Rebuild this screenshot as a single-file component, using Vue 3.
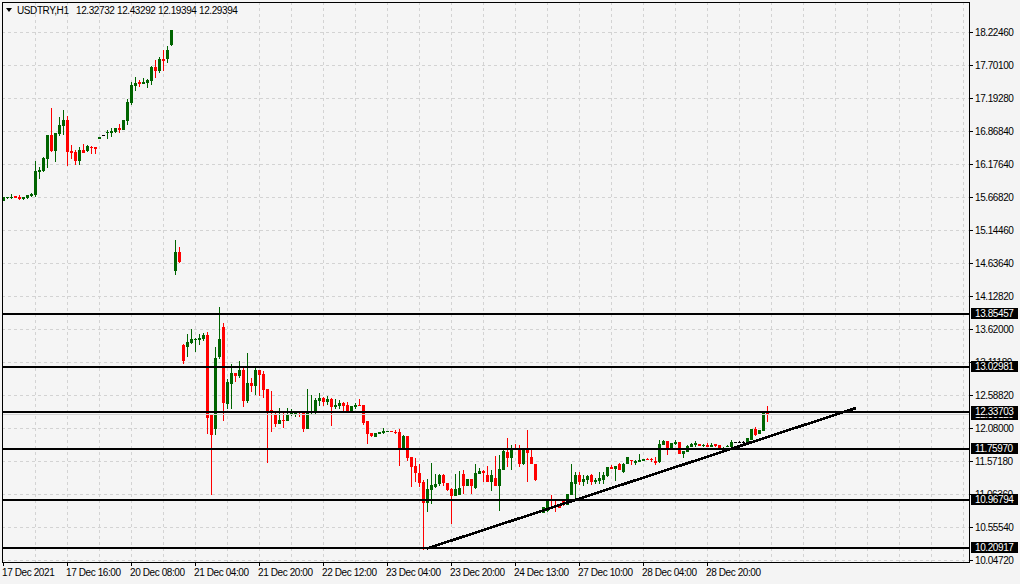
<template>
  <div class="terminal">
    <div class="chart-row">
      <div class="plot">
        <svg class="plot-svg" width="968" height="561" viewBox="0 0 968 561">
          <g class="grid">
            <line v-for="x in gridX" :key="'v' + x" :x1="x" y1="0" :x2="x" y2="561" />
            <line v-for="y in gridY" :key="'h' + y" x1="0" :y1="y" x2="968" :y2="y" />
          </g>
          <g v-for="(c, i) in candles" :key="i" :class="['candle', c.kind]">
            <rect :x="c.x" :y="c.wickTop" width="1" :height="c.wickH" />
            <rect :x="c.x - 1" :y="c.top" width="3" :height="c.h" />
          </g>
          <line class="level level-soft" x1="0" y1="412.5" x2="968" y2="412.5" />
          <line v-for="lv in levels" :key="lv.y" class="level" x1="0" :y1="lv.y - 2" x2="968" :y2="lv.y - 2" />
          <line class="trend" x1="425" y1="546.5" x2="854" y2="406" />
        </svg>
        <div class="legend">
          <span class="legend-arrow"></span>
          <span class="legend-symbol">USDTRY,H1</span>
          <span v-for="p in ohlc" :key="p" class="legend-price">{{ p }}</span>
        </div>
      </div>
      <div class="price-axis">
        <div v-for="t in priceTicks" :key="t.y" class="price-tick" :style="{ top: t.y - 2 + 'px' }">
          <i></i><span>{{ t.label }}</span>
        </div>
        <div class="price-tag" style="top: 413px">12.30120</div>
        <div v-for="lv in levels" :key="lv.label" class="price-tag" :style="{ top: lv.y - 2 + 'px' }">{{ lv.label }}</div>
      </div>
    </div>
    <div class="time-axis">
      <div v-for="(t, i) in timeTicks" :key="t" class="time-tick" :style="{ left: 3 + i * 64 + 'px' }">
        <i></i><span>{{ t }}</span>
      </div>
    </div>
  </div>
</template>

<script setup>
// y values are screen pixels, same for candles and levels
const ohlc = ['12.32732', '12.43292', '12.19394', '12.29394']

const gridX = Array.from({ length: 30 }, (_, i) => 33.5 + i * 32)
const gridY = Array.from({ length: 17 }, (_, i) => 30.5 + i * 33)

const priceTicks = [
  '18.22460', '17.70100', '17.19280', '16.86840', '16.17640', '15.66820',
  '15.14460', '14.63640', '14.12820', '13.62000', '13.11180', '12.58820',
  '12.08000', '11.57180', '11.06360', '10.55540', '10.04720'
].map((label, i) => ({ label, y: 32 + i * 33 }))

const levels = [
  { y: 314, label: '13.85457' },
  { y: 367, label: '13.02981' },
  { y: 412, label: '12.33703' },
  { y: 449, label: '11.75970' },
  { y: 500, label: '10.96794' },
  { y: 548, label: '10.20917' }
]

const timeTicks = [
  '17 Dec 2021', '17 Dec 16:00', '20 Dec 08:00', '21 Dec 04:00', '21 Dec 20:00',
  '22 Dec 12:00', '23 Dec 04:00', '23 Dec 20:00', '24 Dec 13:00', '27 Dec 10:00',
  '28 Dec 04:00', '28 Dec 20:00'
]

// [index, kind, wick top, body top, body bottom, wick bottom], kind: g / r / k
const raw = [
  [0,'g',197,197,201,201],[1,'g',196.7,197,198,199],[2,'g',194,197,198,199],[3,'r',196.3,196.3,198,198],
  [4,'r',195.3,197,199,200],[5,'g',197,197,199,200],[6,'g',195,195,198,199],[7,'g',193,194,196,197],
  [8,'g',161,171,195,197],[9,'g',167,170,172,179],[10,'g',157,158,171,172],[11,'g',135,135,159,168],
  [12,'r',108,135,151,152],[13,'g',133,133,151,162],[14,'g',117,125,134,136],[15,'g',110,120,126,135],
  [16,'r',116,120,152,166],[17,'r',145,151,153,159],[18,'r',150,152,161,165],[19,'g',147,150,161,165],
  [20,'r',144,150,153,153],[21,'g',145,146,151,152],[22,'r',146,147,148,154],[23,'r',147,147,149,154],
  [24,'g',137,137,139,139],[25,'k',135,135,136,136],[26,'g',130,132,133,139],[27,'g',128,131,133,137],
  [28,'g',128,128,132,133],[29,'r',124,128,130,133],[30,'g',120,120,130,130],[31,'g',99,102,121,125],
  [32,'g',82,85,103,105],[33,'g',77,83,86,91],[34,'r',80,82,84,87],[35,'g',78,82,84,84],
  [36,'g',79,80,83,88],[37,'g',66,67,81,85],[38,'r',60,67,71,78],[39,'g',57,59,71,73],
  [40,'r',50,59,61,71],[41,'g',46,50,59,63],[42,'g',30,30,45,46],
  [43,'g',240,252,271,275],[44,'r',247,252,262,263],

  [45,'r',344,345,361,364],[46,'g',334,342,347,357],[47,'g',329,339,343,344],[48,'g',338,339,340,352],
  [49,'g',334,338,340,345],[50,'g',333,335,339,341],[51,'r',332,335,418,434],[52,'r',415,415,435,495],
  [53,'g',347,358,429,435],[54,'g',307,339,357,359],[55,'r',323,327,403,421],[56,'g',379,382,404,409],
  [57,'g',364,373,384,409],[58,'r',373,373,376,382],[59,'g',361,370,376,378],[60,'r',368,370,401,407],
  [61,'g',353,383,401,403],[62,'r',378,383,386,392],[63,'g',366,370,386,395],[64,'r',370,370,375,396],
  [65,'r',371,374,390,398],[66,'r',389,389,411,463],[67,'r',391,410,412,432],[68,'r',412,414,424,427],
  [69,'g',408,420,424,424],[70,'r',411,420,421,428],[71,'g',408,414,421,421],[72,'g',409,412,415,416],
  [73,'g',411,412,414,417],[74,'r',411,412,413,417],[75,'r',413,413,429,432],[76,'g',389,413,429,429],
  [77,'g',395,412,413,414],[78,'g',398,400,412,415],[79,'g',393,398,401,406],[80,'r',397,398,402,406],
  [81,'g',396,399,402,405],[82,'r',398,399,407,426],[83,'g',399,405,407,409],[84,'g',400,403,406,409],
  [85,'r',402,403,406,413],[86,'r',402,405,412,413],[87,'g',406,406,412,412],[88,'g',403,405,407,409],
  [89,'r',399,405,406,406],[90,'r',405,405,423,425],[91,'r',421,421,434,444],[92,'r',433,433,436,437],
  [93,'g',433,433,437,437],[94,'g',432,432,434,434],[95,'g',428,431,433,434],[96,'g',431,431,432,432],
  [97,'r',431,431,432,432],[98,'r',430,432,433,434],[99,'r',429,432,448,466],[100,'g',435,436,448,449],
  [101,'r',436,436,458,461],

  [102,'r',457,457,467,487],[103,'r',458,466,473,482],[104,'r',464,473,483,487],[105,'r',480,482,503,550],
  [106,'g',479,489,503,512],[107,'g',463,485,490,504],[108,'g',474,484,487,488],[109,'g',474,475,484,486],
  [110,'r',474,475,483,486],[111,'r',483,483,490,491],[112,'r',488,489,496,524],[113,'g',474,489,496,496],
  [114,'g',471,488,495,495],[115,'r',470,474,486,494],[116,'g',479,479,486,486],[117,'r',479,479,486,494],
  [118,'g',464,473,488,489],[119,'g',468,471,474,474],[120,'r',470,471,473,482],[121,'r',466,475,482,482],
  [122,'g',470,475,482,491],[123,'r',456,478,486,486],[124,'g',455,469,486,511],[125,'g',449,451,470,470],
  [126,'r',438,452,458,467],[127,'g',445,449,458,470],[128,'r',444,449,450,450],[129,'r',445,449,464,467],
  [130,'g',448,448,464,465],[131,'r',430,449,453,482],[132,'r',449,457,464,464],[133,'r',464,464,480,481],
  [135,'g',507,507,513,513],[136,'g',499,499,511,512],[137,'r',495,499,501,508],[138,'r',500,500,501,512],
  [139,'r',504,504,508,508],[140,'r',499,501,505,506],[141,'g',494,494,505,505],

  [142,'g',464,482,495,495],[143,'g',472,475,484,498],[144,'r',472,475,482,485],[145,'g',475,479,482,486],
  [146,'g',475,476,480,484],[147,'r',474,475,482,485],[148,'g',478,480,482,484],[149,'g',472,478,481,484],
  [150,'g',472,475,480,484],[151,'g',467,467,476,477],[152,'r',465,467,469,469],[153,'g',466,466,469,481],
  [154,'r',463,464,470,470],[155,'g',463,464,472,473],[156,'g',457,457,464,464],[157,'r',460,460,461,465],
  [158,'g',460,461,463,465],[159,'g',454,460,462,462],[160,'g',459,459,461,461],[161,'r',458,459,460,460],
  [162,'r',458,459,460,462],[163,'r',457,461,463,465],[164,'g',440,444,462,463],[165,'g',440,441,445,445],
  [166,'r',441,441,448,455],[167,'g',443,443,449,449],[168,'g',440,442,444,445],[169,'r',442,442,454,454],
  [170,'g',451,451,454,458],[171,'g',445,446,452,452],[172,'g',443,444,447,447],[173,'g',441,443,445,447],
  [174,'r',444,444,446,446],[175,'g',444,445,446,447],[176,'r',443,445,447,447],[177,'g',443,445,447,447],
  [178,'r',444,444,446,447],[179,'r',445,445,449,449],[180,'g',447,448,449,450],[181,'g',445,446,447,447],
  [182,'g',440,442,447,447],[183,'k',442,442,443,443],[184,'k',441,442,443,443],[185,'k',441,442,443,444],
  [186,'g',438,438,444,444],[187,'g',429,429,440,440],[188,'r',427,429,435,436],[189,'g',430,430,434,434],
  [190,'g',412,412,431,431],[191,'r',406,412,415,422]
]

// plot is shifted 2px right and 2px down from the window origin
const candles = raw.map(([i, kind, wt, t, b, wb]) => ({
  kind,
  x: 1 + i * 4,
  wickTop: wt - 2,
  wickH: wb - wt,
  top: t - 2,
  h: Math.max(b - t, 1)
}))
</script>

<style>
html, body {
  margin: 0;
  background: #f4f4f4;
}
</style>

<style scoped>
.terminal {
  width: 1020px;
  height: 584px;
  padding-top: 2px;
  padding-left: 2px;
  box-sizing: border-box;
  display: flex;
  flex-direction: column;
  background: #f4f4f4;
  color: #000;
  font-family: "Liberation Sans", Arial, sans-serif;
  font-size: 10px;
  letter-spacing: -0.4px;
  overflow: hidden;
}

.chart-row {
  display: flex;
}

.plot {
  position: relative;
  width: 968px;
  height: 561px;
  box-sizing: border-box;
  background: #f5f5f5;
  border: 1px solid #000;
  overflow: hidden;
}

.plot-svg {
  display: block;
  margin: -1px 0 0 -1px;
  shape-rendering: crispEdges;
}

.grid line {
  stroke: #d3d3d3;
  stroke-width: 1;
  stroke-dasharray: 3 3;
}

.candle.g rect {
  fill: #006400;
}

.candle.r rect {
  fill: #ff0000;
}

.candle.k rect {
  fill: #000;
}

.level {
  stroke: #000;
  stroke-width: 2;
}

.level-soft {
  stroke: #d3d3d3;
  stroke-width: 1;
}

.trend {
  stroke: #000;
  stroke-width: 2.6;
}

.legend {
  position: absolute;
  top: 1px;
  left: 3px;
  display: flex;
  align-items: center;
  height: 12px;
}

.legend-arrow {
  width: 0;
  height: 0;
  margin-right: 5px;
  border-left: 3.5px solid transparent;
  border-right: 3.5px solid transparent;
  border-top: 4px solid #000;
}

.legend-symbol {
  width: 59px;
}

.legend-price {
  width: 41px;
}

.price-axis {
  position: relative;
  flex: 1;
}

.price-tick {
  position: absolute;
  left: 0;
  display: flex;
  align-items: center;
  height: 12px;
  margin-top: -6px;
}

.price-tick i {
  width: 3px;
  height: 1px;
  margin-right: 2px;
  background: #000;
}

.price-tag {
  position: absolute;
  left: 1px;
  width: 47px;
  height: 11px;
  margin-top: -6px;
  padding-left: 4px;
  box-sizing: border-box;
  background: #000;
  color: #fff;
  line-height: 11px;
}

.time-axis {
  position: relative;
  flex: 1;
  margin-left: -2px;
}

.time-tick {
  position: absolute;
  top: 0;
  display: flex;
  flex-direction: column;
}

.time-tick i {
  width: 1px;
  height: 3px;
  background: #000;
}

.time-tick span {
  margin: 1px 0 0 -1px;
  white-space: nowrap;
}
</style>
